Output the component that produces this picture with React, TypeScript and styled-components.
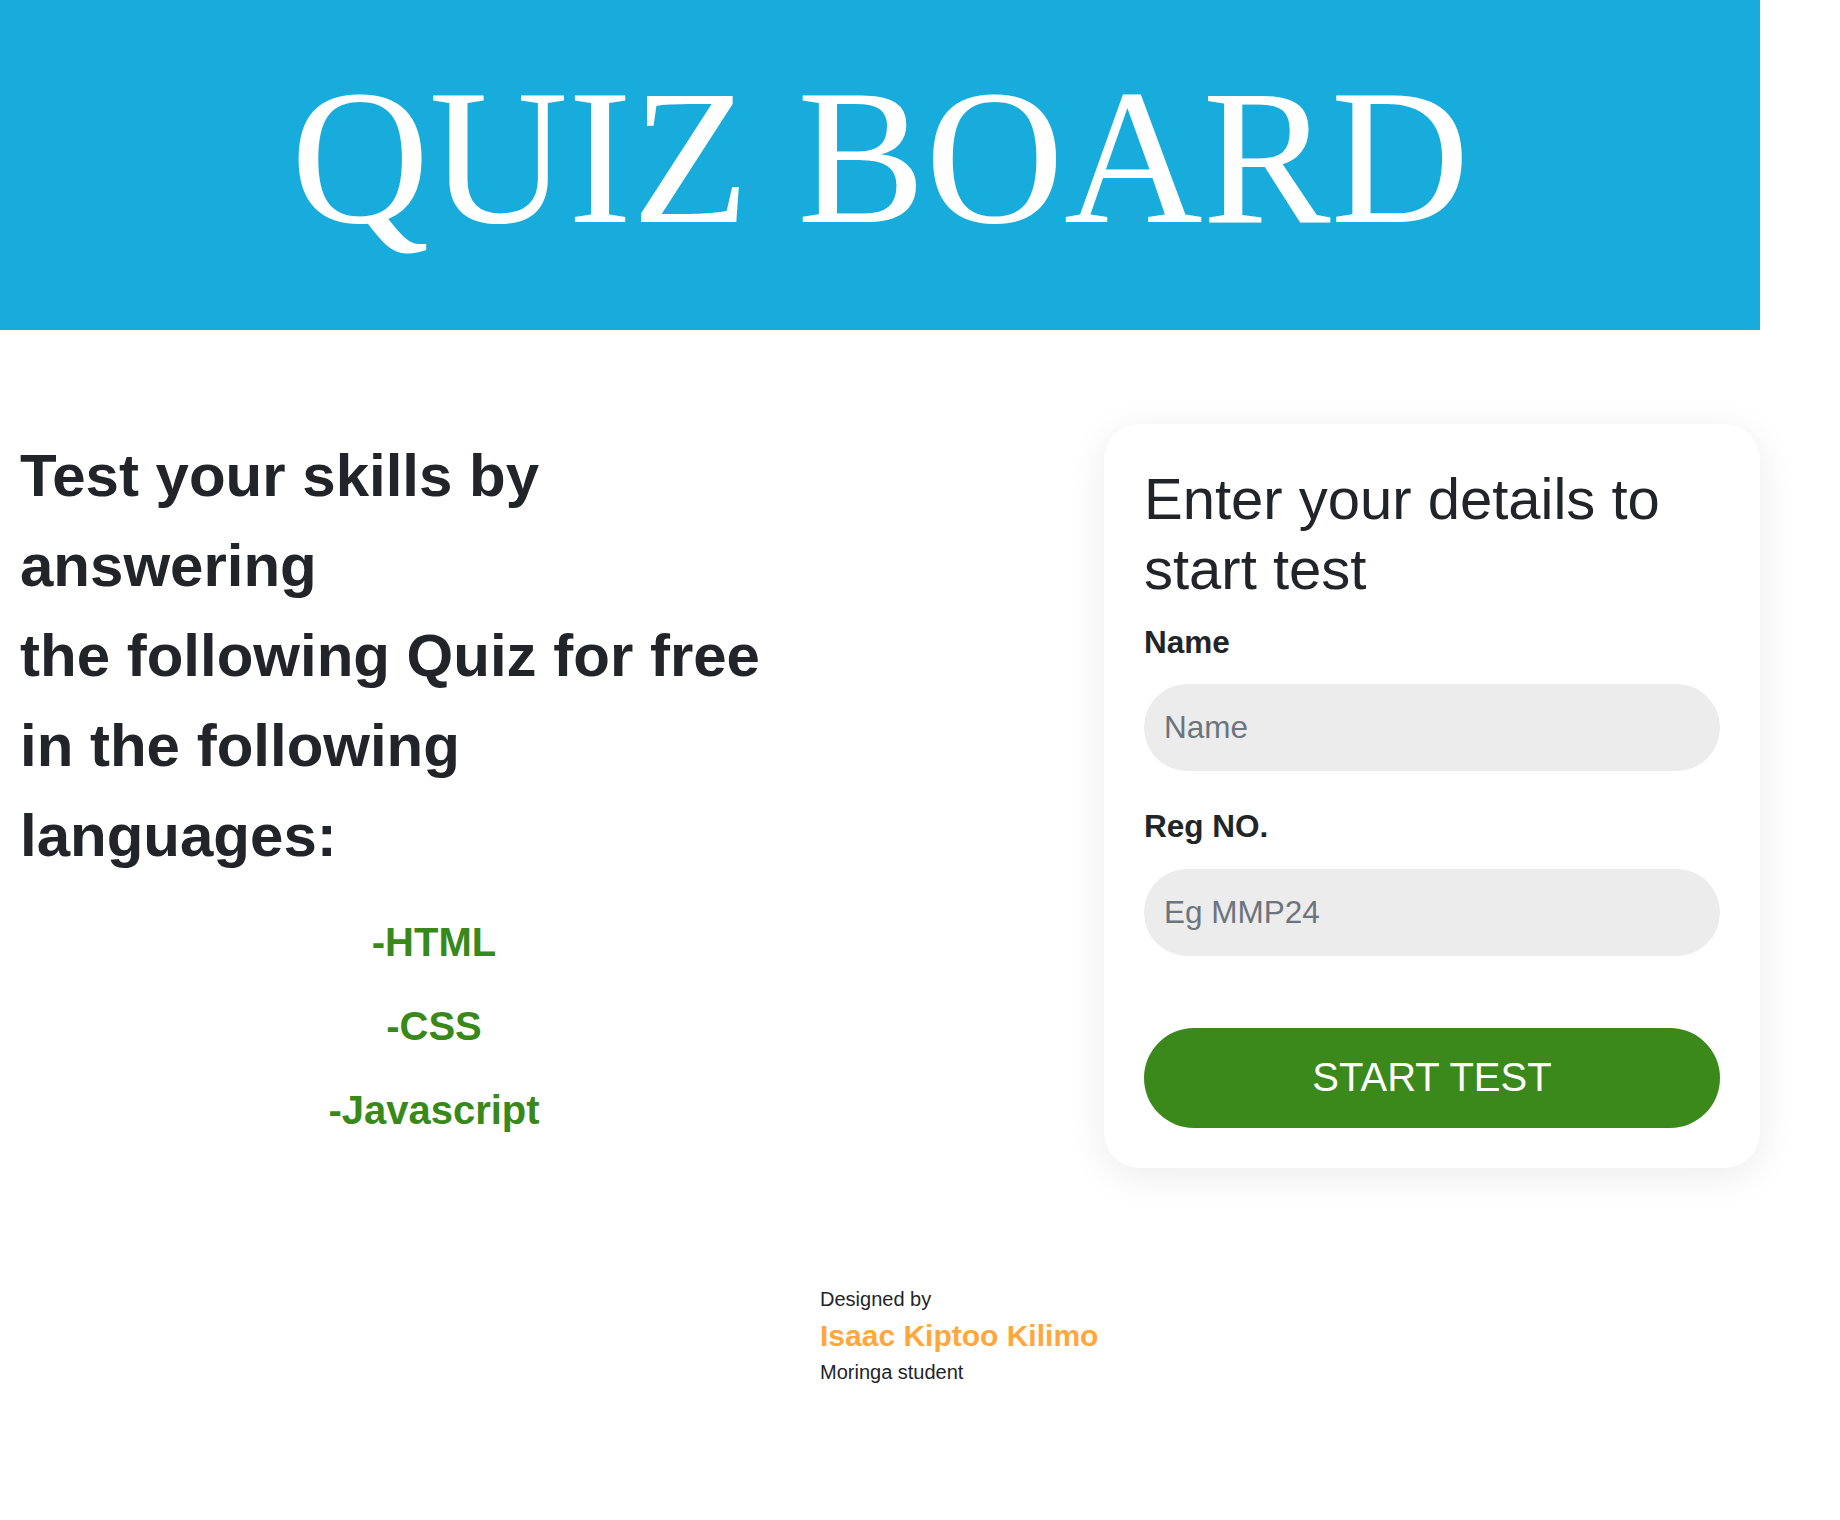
import React from "react";
import styled, {createGlobalStyle} from "styled-components";

const GlobalStyle = createGlobalStyle`
  body {
    margin: 0;
    background: #ffffff;
    font-family: "Liberation Sans", Arial, sans-serif;
    color: #212529;
  }
`;

const Page = styled.div`
  width: 1760px;
`;

const Header = styled.header`
  height: 330px;
  background-color: #17acdc;
  box-sizing: border-box;
  padding-top: 48px;
`;

const Title = styled.h1`
  margin: 0;
  font-family: "Liberation Serif", "Times New Roman", serif;
  font-weight: normal;
  font-size: 192px;
  line-height: 1.15;
  color: #ffffff;
  text-align: center;
`;

const Main = styled.main`
  display: flex;
  justify-content: space-between;
  align-items: flex-start;
  margin-top: 94px;
`;

const Intro = styled.section`
  width: 828px;
  padding: 7px 20px 0;
`;

const Lead = styled.p`
  max-width: 756px;
  margin: 0;
  font-size: 60px;
  font-weight: bold;
  line-height: 1.5;
`;

const LanguageList = styled.ul`
  list-style: none;
  margin: 19px 0 0;
  padding: 0;
  text-align: center;
`;

const Language = styled.li`
  font-size: 40px;
  font-weight: bold;
  line-height: 84px;
  color: #38891a;
`;

const Card = styled.form`
  width: 656px;
  box-sizing: border-box;
  padding: 40px;
  background: #ffffff;
  border-radius: 36px;
  box-shadow: 0 8px 40px rgba(0, 0, 0, 0.08);
`;

const CardTitle = styled.h2`
  margin: 0 0 16px;
  font-size: 58px;
  font-weight: normal;
  line-height: 1.2;
`;

const Label = styled.label<{ $spaced?: boolean }>`
  display: block;
  margin-top: ${({$spaced}) => ($spaced ? "32px" : "0")};
  font-size: 31.5px;
  font-weight: bold;
  line-height: 1.5;
`;

const Input = styled.input`
  display: block;
  width: 100%;
  height: 87px;
  box-sizing: border-box;
  margin-top: 18px;
  padding: 0 20px;
  border: none;
  border-radius: 44px;
  background: #ececec;
  font-family: "Liberation Sans", Arial, sans-serif;
  font-size: 31.5px;
  color: #212529;
  outline: none;

  &::placeholder {
    color: #6c757d;
  }
`;

const StartButton = styled.button`
  display: block;
  width: 100%;
  height: 100px;
  margin-top: 72px;
  border: none;
  border-radius: 50px;
  background: #3a891a;
  color: #ffffff;
  font-family: "Liberation Sans", Arial, sans-serif;
  font-size: 40px;
  cursor: pointer;
`;

const Footer = styled.footer`
  margin-top: 116px;
  padding-left: 820px;
  padding-bottom: 60px;
`;

const FooterLine = styled.div`
  font-size: 20px;
  line-height: 30px;
`;

const Author = styled.div`
  font-size: 30px;
  font-weight: bold;
  line-height: 1.45;
  color: #ffa73d;
`;

const languages = ["-HTML", "-CSS", "-Javascript"];

const App: React.FC = () => {
    return <Page>
        <GlobalStyle/>
        <Header>
            <Title>QUIZ BOARD</Title>
        </Header>
        <Main>
            <Intro>
                <Lead>
                    Test your skills by answering<br/>
                    the following Quiz for free in the following languages:
                </Lead>
                <LanguageList>
                    {languages.map((language) => <Language key={language}>{language}</Language>)}
                </LanguageList>
            </Intro>
            <Card onSubmit={(e) => e.preventDefault()}>
                <CardTitle>Enter your details to start test</CardTitle>
                <Label htmlFor="name">Name</Label>
                <Input id="name" placeholder="Name"/>
                <Label htmlFor="reg" $spaced>Reg NO.</Label>
                <Input id="reg" placeholder="Eg MMP24"/>
                <StartButton type="submit">START TEST</StartButton>
            </Card>
        </Main>
        <Footer>
            <FooterLine>Designed by</FooterLine>
            <Author>Isaac Kiptoo Kilimo</Author>
            <FooterLine>Moringa student</FooterLine>
        </Footer>
    </Page>
}

export default App;
